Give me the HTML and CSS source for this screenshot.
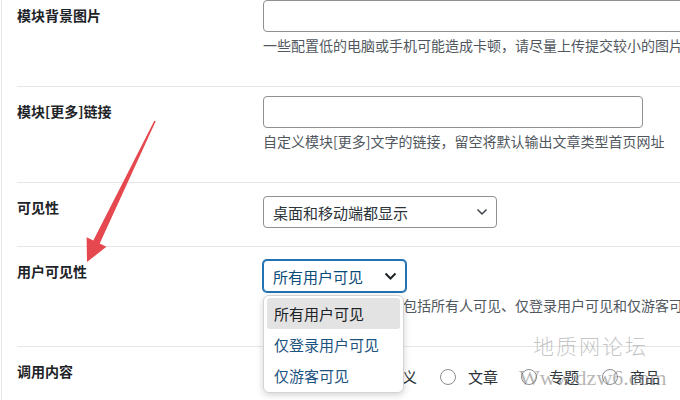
FILE: index.html
```html
<!DOCTYPE html>
<html lang="zh-CN">
<head>
<meta charset="utf-8">
<title>模块设置</title>
<link rel="stylesheet" href="styles.css">
</head>
<body>
<div class="page">
  <div class="row r1">
    <div class="label">模块背景图片</div>
    <div class="field">
      <div class="text-input input-wide"></div>
      <p class="desc">一些配置低的电脑或手机可能造成卡顿，请尽量上传提交较小的图片</p>
    </div>
  </div>
  <div class="row r2">
    <div class="label">模块[更多]链接</div>
    <div class="field">
      <div class="text-input input-link"></div>
      <p class="desc">自定义模块[更多]文字的链接，留空将默认输出文章类型首页网址</p>
    </div>
  </div>
  <div class="row r3">
    <div class="label">可见性</div>
    <div class="field">
      <div class="select select-device">
        <span>桌面和移动端都显示</span>
        <svg class="chev" width="12" height="8" viewBox="0 0 12 8"><path d="M1.5 1.5 L6 6 L10.5 1.5" fill="none" stroke="#3c434a" stroke-width="1.5"/></svg>
      </div>
    </div>
  </div>
  <div class="row r4">
    <div class="label">用户可见性</div>
    <div class="field">
      <div class="select-wrap">
        <div class="select select-user">
          <span>所有用户可见</span>
          <svg class="chev" width="13" height="9" viewBox="0 0 13 9"><path d="M1.5 1.5 L6.5 6.5 L11.5 1.5" fill="none" stroke="#1d2327" stroke-width="2"/></svg>
        </div>
        <ul class="dropdown">
          <li class="opt active">所有用户可见</li>
          <li class="opt">仅登录用户可见</li>
          <li class="opt">仅游客可见</li>
        </ul>
      </div>
      <p class="desc">设置用户可见性的方式包括所有人可见、仅登录用户可见和仅游客可见</p>
    </div>
  </div>
  <div class="row r5">
    <div class="label">调用内容</div>
    <div class="field">
      <div class="radios">
        <label class="radio"><i class="dot"></i>全部</label>
        <label class="radio"><i class="dot"></i>自定义</label>
        <label class="radio"><i class="dot"></i>文章</label>
        <label class="radio"><i class="dot"></i>专题</label>
        <label class="radio"><i class="dot"></i>商品</label>
      </div>
    </div>
  </div>

  <svg class="arrow" width="680" height="400" viewBox="0 0 680 400">
    <polygon points="87,262 86.6,237.2 93.3,240.5 154.3,120.7 155.7,121.3 99.7,243.5 106.4,246.8" fill="#e5484f"/>
  </svg>
  <div class="wm wm-cn">地质网论坛</div>
  <div class="wm wm-en">Www.dzw6.com</div>
</div>
</body>
</html>
```
FILE: styles.css
```css
* { box-sizing: border-box; }
html, body {
  margin: 0;
  padding: 0;
  background: #fff;
  overflow: hidden;
}
body {
  width: 680px;
  height: 400px;
  font-family: "Noto Sans CJK SC", "Noto Sans", sans-serif;
  color: #1d2327;
}
.page {
  position: relative;
  height: 400px;
  margin-left: 1px;
  border-left: 1px solid #e6e6e6;
  padding-left: 15px;
}
.row {
  display: flex;
  align-items: flex-start;
  border-bottom: 1px solid #e6e6e6;
  width: 700px;
}
.r5 { border-bottom: none; }
.label {
  width: 246px;
  flex: none;
  font-size: 14px;
  font-weight: 700;
  line-height: 20px;
  padding-top: 14px;
}
.r1 .label { padding-top: 5px; }
.field { flex: 1; }
.r1 .field { padding: 0 0 31px; }
.r2 .field { padding: 9px 0 31px; }
.r3 .field { padding: 13px 0 18px; }
.r4 .field { padding: 13px 0 31px; }
.r5 .field { padding: 20px 0 0; }

.text-input {
  height: 32px;
  border: 1px solid #8c8f94;
  border-radius: 4px;
  background: #fff;
}
.input-wide { width: 440px; }
.input-link { width: 380px; }
.desc {
  margin: 3px 0 0;
  font-size: 14px;
  line-height: 20px;
  color: #50575e;
  white-space: nowrap;
}

.select {
  height: 32px;
  border: 1px solid #8c8f94;
  border-radius: 4px;
  background: #fff;
  display: flex;
  align-items: center;
  justify-content: space-between;
  padding: 0 8px 0 9px;
  font-size: 15px;
  color: #2c3338;
}
.select-device { width: 234px; }
.select-user {
  width: 143px;
  border-color: #2271b1;
  box-shadow: 0 0 0 1px #2271b1;
  color: #0a4b78;
  padding-right: 8px;
}
.select-wrap { position: relative; width: 143px; }
.dropdown {
  position: absolute;
  left: 0;
  top: 35px;
  width: 141px;
  margin: 0;
  padding: 2px 3px 1px;
  list-style: none;
  background: #fff;
  border: 1px solid #d4d4d4;
  border-radius: 6px;
  box-shadow: 0 2px 7px rgba(0, 0, 0, 0.18);
  z-index: 2;
}
.opt {
  height: 31px;
  line-height: 31px;
  padding-left: 7px;
  font-size: 15px;
  color: #1c5480;
  border-radius: 3px;
  white-space: nowrap;
}
.opt.active {
  background: #e3e3e3;
  color: #1d2327;
}

.radios {
  display: flex;
  gap: 23px;
}
.radio {
  display: flex;
  align-items: center;
  gap: 12px;
  font-size: 15px;
  line-height: 20px;
  color: #2c3338;
  white-space: nowrap;
}
.dot {
  width: 16px;
  height: 16px;
  border: 1px solid #8c8f94;
  border-radius: 50%;
  background: #fff;
}

.arrow {
  position: absolute;
  left: -2px;
  top: 0;
  pointer-events: none;
  z-index: 3;
}
.wm {
  position: absolute;
  pointer-events: none;
  z-index: 4;
  white-space: nowrap;
}
.wm-cn {
  left: 531px;
  top: 330px;
  font-size: 21px;
  letter-spacing: 2px;
  color: rgba(140, 140, 140, 0.5);
  font-family: "Noto Sans CJK SC", sans-serif;
  font-weight: 300;
  line-height: 30px;
}
.wm-en {
  left: 517px;
  top: 364px;
  font-size: 22px;
  color: rgba(110, 110, 110, 0.5);
  font-family: "Liberation Serif", serif;
  line-height: 28px;
}
```
